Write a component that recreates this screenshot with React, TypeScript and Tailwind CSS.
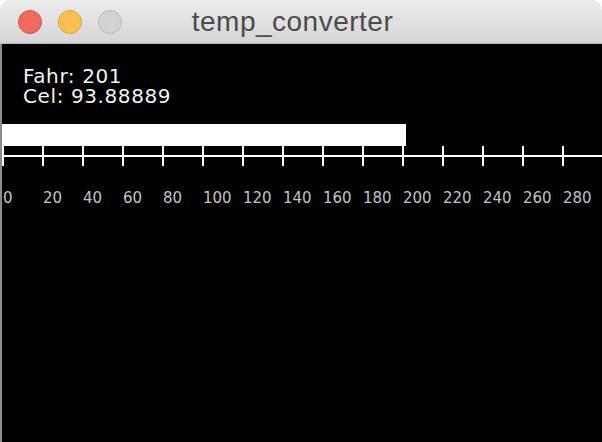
import React from "react"

const fahr = 201
const cel = ((fahr - 32) * 5) / 9

function Ruler() {
  const ticks = Array.from({ length: 15 }, (_, i) => i)
  return (
    <svg width="600" height="90" viewBox="0 0 600 90" className="block">
      {/* bar: fahr value scaled by 2 */}
      <rect x="0" y="0" width={fahr * 2 + 2} height="22" fill="#fff" />
      <rect x="0" y="31" width="600" height="2" fill="#fff" />
      {ticks.map((i) => (
        <rect key={i} x={i * 40} y="22" width="2" height="20" fill="#fff" />
      ))}
      {ticks.map((i) => (
        <text
          key={"l" + i}
          x={i * 40 + 1}
          y="79"
          fill="#c4c4c4"
          fontSize="15"
          fontFamily="'DejaVu Sans', sans-serif"
        >
          {i * 20}
        </text>
      ))}
    </svg>
  )
}

export default function App() {
  return (
    <div className="w-[602px] h-[442px] flex flex-col bg-white overflow-hidden">
      <div className="relative h-[44px] shrink-0 flex items-center rounded-t-[10px] bg-gradient-to-b from-[#ececec] to-[#d5d5d5] border-b border-[#b9b9b9]">
        <div className="flex gap-[16px] pl-[18px]">
          <span className="w-[24px] h-[24px] rounded-full bg-[#ee6a5f] border border-[#d4544a]" />
          <span className="w-[24px] h-[24px] rounded-full bg-[#f6bf50] border border-[#d9a33e]" />
          <span className="w-[24px] h-[24px] rounded-full bg-[#d3d3d3] border border-[#b9b9b9]" />
        </div>
        <div className="absolute inset-0 flex items-center justify-center pt-[1px] pr-[17px] text-[28px] tracking-[0.5px] text-[#4b4b4b]" style={{ fontFamily: "'Liberation Sans', Arial, sans-serif" }}>
          temp_converter
        </div>
      </div>
      <div className="flex-1 bg-black border-l-2 border-[#8c8c8c]">
        <div className="pt-[22px] pl-[21px] text-[20px] leading-[20px] tracking-[0.6px] text-[#f2f2f2] font-['DejaVu_Sans',sans-serif]">
          <p>Fahr: {fahr}</p>
          <p>Cel: {cel.toFixed(5)}</p>
        </div>
        <div className="pt-[18px]">
          <Ruler />
        </div>
      </div>
    </div>
  )
}
